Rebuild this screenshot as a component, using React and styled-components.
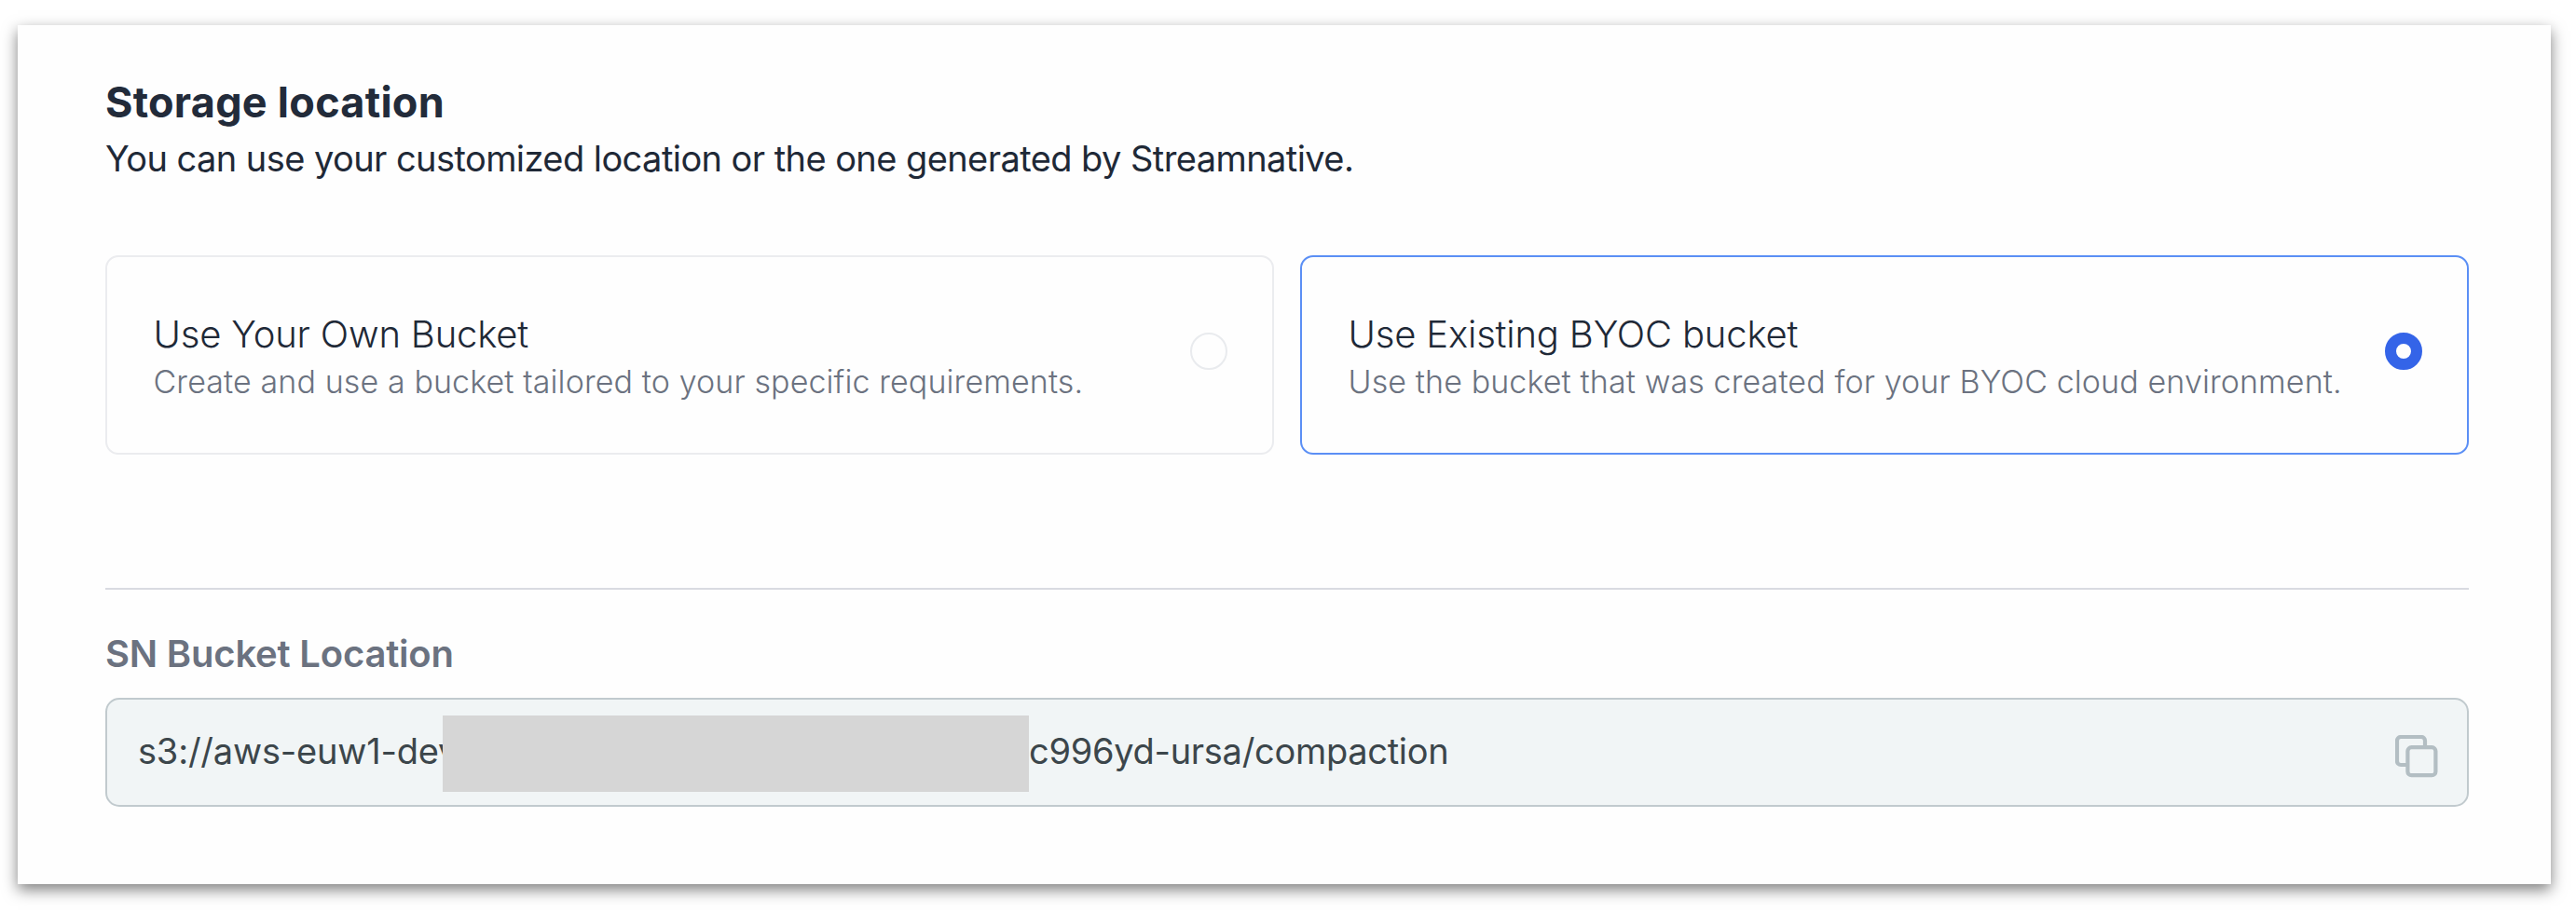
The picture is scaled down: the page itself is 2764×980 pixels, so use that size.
import React, { useState } from 'react'
import styled, { createGlobalStyle } from 'styled-components'

const options = [
    {
        id: 'own',
        title: 'Use Your Own Bucket',
        description: 'Create and use a bucket tailored to your specific requirements.',
    },
    {
        id: 'byoc',
        title: 'Use Existing BYOC bucket',
        description: 'Use the bucket that was created for your BYOC cloud environment.',
    },
]

const CopyIcon = () => (
    <svg width="46" height="46" viewBox="0 0 46 46" fill="none" stroke="#b3bec3" strokeWidth="4.2">
        <rect x="13.4" y="13.2" width="30" height="30" rx="4" />
        <path d="M13.4 32H6a4 4 0 0 1-4-4V6a4 4 0 0 1 4-4h22a4 4 0 0 1 4 4v7.2" />
    </svg>
)

const App = () => {
    const [selected, setSelected] = useState('byoc')

    return (
        <S.Page>
            <GlobalStyle />
            <S.Panel>
                <S.Title>Storage location</S.Title>
                <S.Description>
                    You can use your customized location or the one generated by Streamnative.
                </S.Description>
                <S.Options>
                    {options.map(({ id, title, description }) => (
                        <S.Option key={id} $active={selected === id} onClick={() => setSelected(id)}>
                            <div>
                                <S.OptionTitle>{title}</S.OptionTitle>
                                <S.OptionText>{description}</S.OptionText>
                            </div>
                            <S.Radio $active={selected === id} />
                        </S.Option>
                    ))}
                </S.Options>
                <S.Divider />
                <S.Label>SN Bucket Location</S.Label>
                <S.Field>
                    <S.PathStart>s3://aws-euw1-dev</S.PathStart>
                    <S.Mask />
                    <S.Path>c996yd-ursa/compaction</S.Path>
                    <S.CopyButton>
                        <CopyIcon />
                    </S.CopyButton>
                </S.Field>
            </S.Panel>
        </S.Page>
    )
}

const GlobalStyle = createGlobalStyle`
    * {
        box-sizing: border-box;
    }

    body {
        margin: 0;
        background-color: #ffffff;
        font-family: Inter, 'Liberation Sans', sans-serif;
    }
`

const Path = styled.span`
    padding-bottom: 3px;
    font-size: 38px;
    line-height: 50px;
    letter-spacing: -0.3px;
    white-space: nowrap;
    color: #3c464b;
`

const S = {
    Page: styled.main`
        width: 2764px;
        height: 980px;
        padding: 27px 27px 31px 19px;
        overflow: hidden;
    `,
    Panel: styled.section`
        display: flex;
        flex-direction: column;
        height: 922px;
        padding: 55px 88px 0 94px;
        background-color: #fefefe;
        box-shadow: 0 6px 15px rgba(0, 0, 0, 0.5);
    `,
    Title: styled.h2`
        margin: 0;
        font-size: 45px;
        font-weight: 700;
        line-height: 56px;
        letter-spacing: 0.25px;
        color: #222b3a;
    `,
    Description: styled.p`
        margin: 4px 0 0;
        font-size: 38px;
        line-height: 56px;
        letter-spacing: -0.57px;
        color: #1f2937;
    `,
    Options: styled.div`
        display: grid;
        grid-template-columns: 1fr 1fr;
        gap: 28px;
        margin-top: 76px;
    `,
    Option: styled.div`
        display: flex;
        align-items: flex-start;
        justify-content: space-between;
        height: 214px;
        padding: 57px 48px 0 49.5px;
        border: 2px solid ${({ $active }) => ($active ? '#5b8ff5' : '#ebecef')};
        border-radius: 14px;
        white-space: nowrap;
        cursor: pointer;
    `,
    OptionTitle: styled.div`
        font-size: 40px;
        font-weight: 300;
        line-height: 52px;
        letter-spacing: -0.18px;
        color: #1f2937;
    `,
    OptionText: styled.div`
        margin-top: 4px;
        font-size: 34px;
        font-weight: 300;
        line-height: 42px;
        letter-spacing: 0.11px;
        color: #6b7280;
    `,
    Radio: styled.span`
        flex: none;
        width: 40px;
        height: 40px;
        margin-top: 24px;
        border: ${({ $active }) => ($active ? '12px solid #3464e8' : '2px solid #e9ebee')};
        border-radius: 50%;
    `,
    Divider: styled.hr`
        width: 100%;
        height: 2px;
        margin: 143px 0 0;
        border: 0;
        background-color: #d9dbe1;
    `,
    Label: styled.div`
        margin-top: 41px;
        font-size: 40px;
        font-weight: 600;
        line-height: 56px;
        letter-spacing: -0.2px;
        color: #6b7280;
    `,
    Field: styled.div`
        display: flex;
        align-items: center;
        height: 117px;
        margin-top: 19px;
        padding: 0 31px 0 33px;
        border: 2px solid #c1cace;
        border-radius: 15px;
        background-color: #f1f5f6;
    `,
    Path,
    PathStart: styled(Path)`
        width: 327px;
        letter-spacing: -0.2px;
    `,
    // covers the account part of the bucket path
    Mask: styled.span`
        position: relative;
        width: 629px;
        height: 82px;
        margin-top: 2px;
        background-color: #d6d6d6;
    `,
    CopyButton: styled.span`
        display: flex;
        margin: 8px 0 0 auto;
    `,
}

export default App
